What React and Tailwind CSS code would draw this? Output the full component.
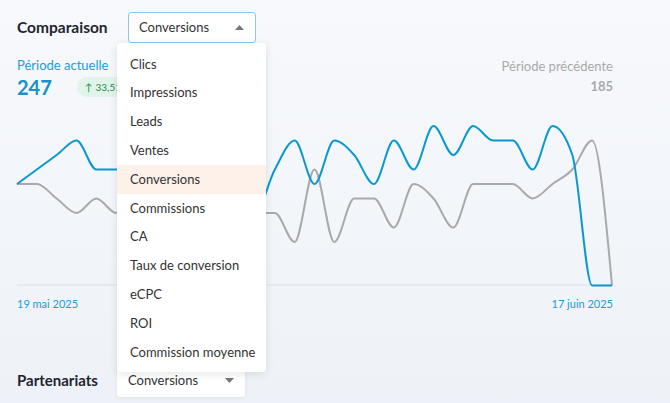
import React from "react";

const blue = [7, 8, 9, 10, 8, 8, 8, 7, 6, 7, 8, 8, 5, 8, 10, 7, 10, 9, 7, 10, 8, 11, 9, 11, 10, 10, 8, 11, 9, 0, 0];
const grey = [7, 7, 6, 5, 6, 5, 6, 7, 6, 7, 6, 8, 5, 5, 3, 8, 3, 6, 6, 4, 7, 6, 4, 7, 7, 7, 6, 7, 8, 10, 0];

const STEP = 595 / 30;
const toPts = (data) => data.map((v, i) => [i * STEP, 188.5 - 14.5 * v]);

function monotonePath(pts) {
  const n = pts.length;
  const sign = (x) => (x < 0 ? -1 : 1);
  const t = new Array(n).fill(0);
  for (let i = 1; i < n - 1; i++) {
    const [x0, y0] = pts[i - 1];
    const [x1, y1] = pts[i];
    const [x2, y2] = pts[i + 1];
    const h0 = x1 - x0, h1 = x2 - x1;
    const s0 = (y1 - y0) / h0, s1 = (y2 - y1) / h1;
    const p = (s0 * h1 + s1 * h0) / (h0 + h1);
    const r = (sign(s0) + sign(s1)) * Math.min(Math.abs(s0), Math.abs(s1), 0.5 * Math.abs(p));
    t[i] = r || 0;
  }
  const h = pts[1][0] - pts[0][0];
  t[0] = (3 * (pts[1][1] - pts[0][1]) / h - t[1]) / 2;
  const hl = pts[n - 1][0] - pts[n - 2][0];
  t[n - 1] = (3 * (pts[n - 1][1] - pts[n - 2][1]) / hl - t[n - 2]) / 2;
  let d = `M${pts[0][0]},${pts[0][1]}`;
  for (let i = 0; i < n - 1; i++) {
    const [x0, y0] = pts[i];
    const [x1, y1] = pts[i + 1];
    const dx = (x1 - x0) / 3;
    d += `C${x0 + dx},${y0 + dx * t[i]} ${x1 - dx},${y1 - dx * t[i + 1]} ${x1},${y1}`;
  }
  return d;
}

const items = [
  "Clics",
  "Impressions",
  "Leads",
  "Ventes",
  "Conversions",
  "Commissions",
  "CA",
  "Taux de conversion",
  "eCPC",
  "ROI",
  "Commission moyenne",
];

export default function App() {
  return (
    <div className="w-[670px] h-[403px] overflow-hidden bg-gradient-to-b from-[#f7f9fc] to-[#eef2f8] font-['Lato',sans-serif] text-[#333]">
      <div className="w-[613px] pl-[17px] pt-[12px]">
        {/* Row 1 */}
        <div className="flex items-center h-[31px]">
          <div className="w-[111px] text-[15.5px] font-bold text-[#1f2430]">Comparaison</div>
          <div className="relative w-[128px] h-[31px]">
            <div className="flex items-center justify-between h-full rounded-[3px] border border-[#8ec6ea] bg-white pl-[10px] pr-[11px] text-[13px] text-[#333]">
              <span>Conversions</span>
              <svg width="9" height="5" viewBox="0 0 9 5">
                <path d="M0 5 L4.5 0 L9 5 Z" fill="#777" />
              </svg>
            </div>
            <div className="absolute left-[-11px] top-[31px] z-10 w-[149px] rounded-[4px] bg-white pt-[7px] pb-[5px] shadow-[0_2px_8px_rgba(30,40,60,0.12)]">
              {items.map((it) => (
                <div
                  key={it}
                  className={
                    "flex items-center h-[28.8px] pl-[13px] text-[13px] text-[#333] " +
                    (it === "Conversions" ? "bg-[#fdf1ea]" : "")
                  }
                >
                  {it}
                </div>
              ))}
            </div>
          </div>
        </div>

        {/* Period row */}
        <div className="flex justify-between mt-[14px]">
          <div>
            <div className="text-[13px] leading-[16px] text-[#1b9bd7]">Période actuelle</div>
            <div className="flex items-center mt-[4px] h-[20px]">
              <span className="text-[20px] font-bold leading-[20px] text-[#1592c9] w-[60px]">247</span>
              <span className="flex items-center h-[20px] rounded-full bg-[#e1f4ea] pl-[8px] pr-[8px] text-[10px] text-[#1f8a4c]">
                <span className="mr-[3px] text-[10px]">↑</span>33,51 %
              </span>
            </div>
          </div>
          <div className="text-right">
            <div className="text-[13px] leading-[16px] text-[#a9a9a9] mt-[1px]">Période précédente</div>
            <div className="mt-[4px] text-[13px] font-bold leading-[16px] text-[#a9a9a9]">185</div>
          </div>
        </div>

        {/* Chart */}
        <svg width="596" height="193" viewBox="0 0 596 193" className="block overflow-visible">
          <line x1="0" y1="188" x2="595" y2="188" stroke="#e6eaef" strokeWidth="2" />
          <path d={monotonePath(toPts(grey))} fill="none" stroke="#a9a9a9" strokeWidth="2" />
          <path d={monotonePath(toPts(blue))} fill="none" stroke="#0b98cf" strokeWidth="2" />
        </svg>

        {/* Dates */}
        <div className="flex justify-between mt-[7px] h-[14px] items-center text-[11px] text-[#1b9bd7]">
          <span>19 mai 2025</span>
          <span>17 juin 2025</span>
        </div>

        {/* Partenariats */}
        <div className="flex items-center mt-[53px]">
          <div className="w-[100px] text-[15px] font-bold text-[#1f2430]">Partenariats</div>
          <div className="flex items-center justify-between w-[128px] h-[33px] rounded-[3px] bg-white pl-[11px] pr-[11px] text-[13px] text-[#333] shadow-[0_1px_4px_rgba(30,40,60,0.08)]">
            <span>Conversions</span>
            <svg width="9" height="5" viewBox="0 0 9 5">
              <path d="M0 0 L4.5 5 L9 0 Z" fill="#777" />
            </svg>
          </div>
        </div>
      </div>
    </div>
  );
}
